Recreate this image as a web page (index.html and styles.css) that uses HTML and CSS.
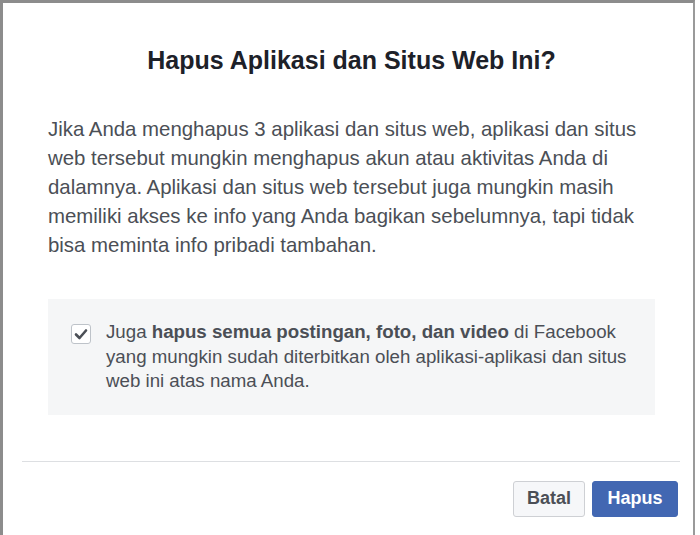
FILE: index.html
```html
<!DOCTYPE html>
<html lang="id">
<head>
<meta charset="utf-8">
<title>Hapus Aplikasi dan Situs Web Ini?</title>
<link rel="stylesheet" href="styles.css">
</head>
<body>
<div class="screen">
  <div class="dialog">
    <h1 class="title">Hapus Aplikasi dan Situs Web Ini?</h1>
    <p class="body-text">Jika Anda menghapus 3 aplikasi dan situs web, aplikasi dan situs web tersebut mungkin menghapus akun atau aktivitas Anda di dalamnya. Aplikasi dan situs web tersebut juga mungkin masih memiliki akses ke info yang Anda bagikan sebelumnya, tapi tidak bisa meminta info pribadi tambahan.</p>
    <div class="option">
      <span class="checkbox">
        <svg width="14" height="12" viewBox="0 0 14 12"><path d="M2 6.5 L5.5 10 L12 2.5" fill="none" stroke="#4b4f56" stroke-width="2.6" stroke-linecap="round" stroke-linejoin="round"/></svg>
      </span>
      <p class="option-text">Juga <b>hapus semua postingan, foto, dan video</b> di Facebook yang mungkin sudah diterbitkan oleh aplikasi-aplikasi dan situs web ini atas nama Anda.</p>
    </div>
  </div>
  <div class="footer">
    <button class="btn btn-cancel">Batal</button>
    <button class="btn btn-primary">Hapus</button>
  </div>
</div>
</body>
</html>
```
FILE: styles.css
```css
html, body {
  margin: 0;
  padding: 0;
  background: #ffffff;
}
body {
  font-family: "Liberation Sans", Arial, sans-serif;
}
.screen {
  box-sizing: border-box;
  width: 695px;
  height: 535px;
  border-top: 3px solid #8c8c8c;
  border-left: 3px solid #8c8c8c;
  border-right: 2px solid #9a9a9a;
  background: #ffffff;
  display: flex;
  flex-direction: column;
}
.dialog {
  padding: 0 38px 0 45px;
}
.title {
  margin: 42px 0 0;
  text-align: center;
  font-size: 25px;
  font-weight: bold;
  color: #1d2129;
  line-height: 30px;
}
.body-text {
  margin: 40px 0 0;
  font-size: 20.4px;
  line-height: 29px;
  color: #4b4f56;
}
.option {
  margin: 39px 0 0;
  background: #f5f6f7;
  display: flex;
  align-items: flex-start;
  gap: 15px;
  padding: 21px 20px 21px 23px;
}
.checkbox {
  flex: none;
  box-sizing: border-box;
  width: 20px;
  height: 20px;
  margin-top: 4px;
  border: 1px solid #bec3c9;
  border-radius: 3px;
  background: #ffffff;
  display: flex;
  align-items: center;
  justify-content: center;
}
.option-text {
  margin: 0;
  font-size: 18.7px;
  line-height: 24.5px;
  color: #4b4f56;
}
.option-text b {
  color: #4b4f56;
}
.footer {
  margin: 46px 13px 0 19px;
  border-top: 1px solid #dddfe2;
  display: flex;
  justify-content: flex-end;
  gap: 7px;
  padding: 19px 2px 0 0;
}
.btn {
  box-sizing: border-box;
  font-family: "Liberation Sans", Arial, sans-serif;
  font-size: 18px;
  font-weight: bold;
  height: 36px;
  border-radius: 3px;
  padding: 0;
  cursor: pointer;
}
.btn-cancel {
  width: 72px;
  background: #f6f7f9;
  border: 1px solid #ced0d4;
  color: #4b4f56;
}
.btn-primary {
  width: 86px;
  background: #4267b2;
  border: 1px solid #4267b2;
  color: #ffffff;
}
```
